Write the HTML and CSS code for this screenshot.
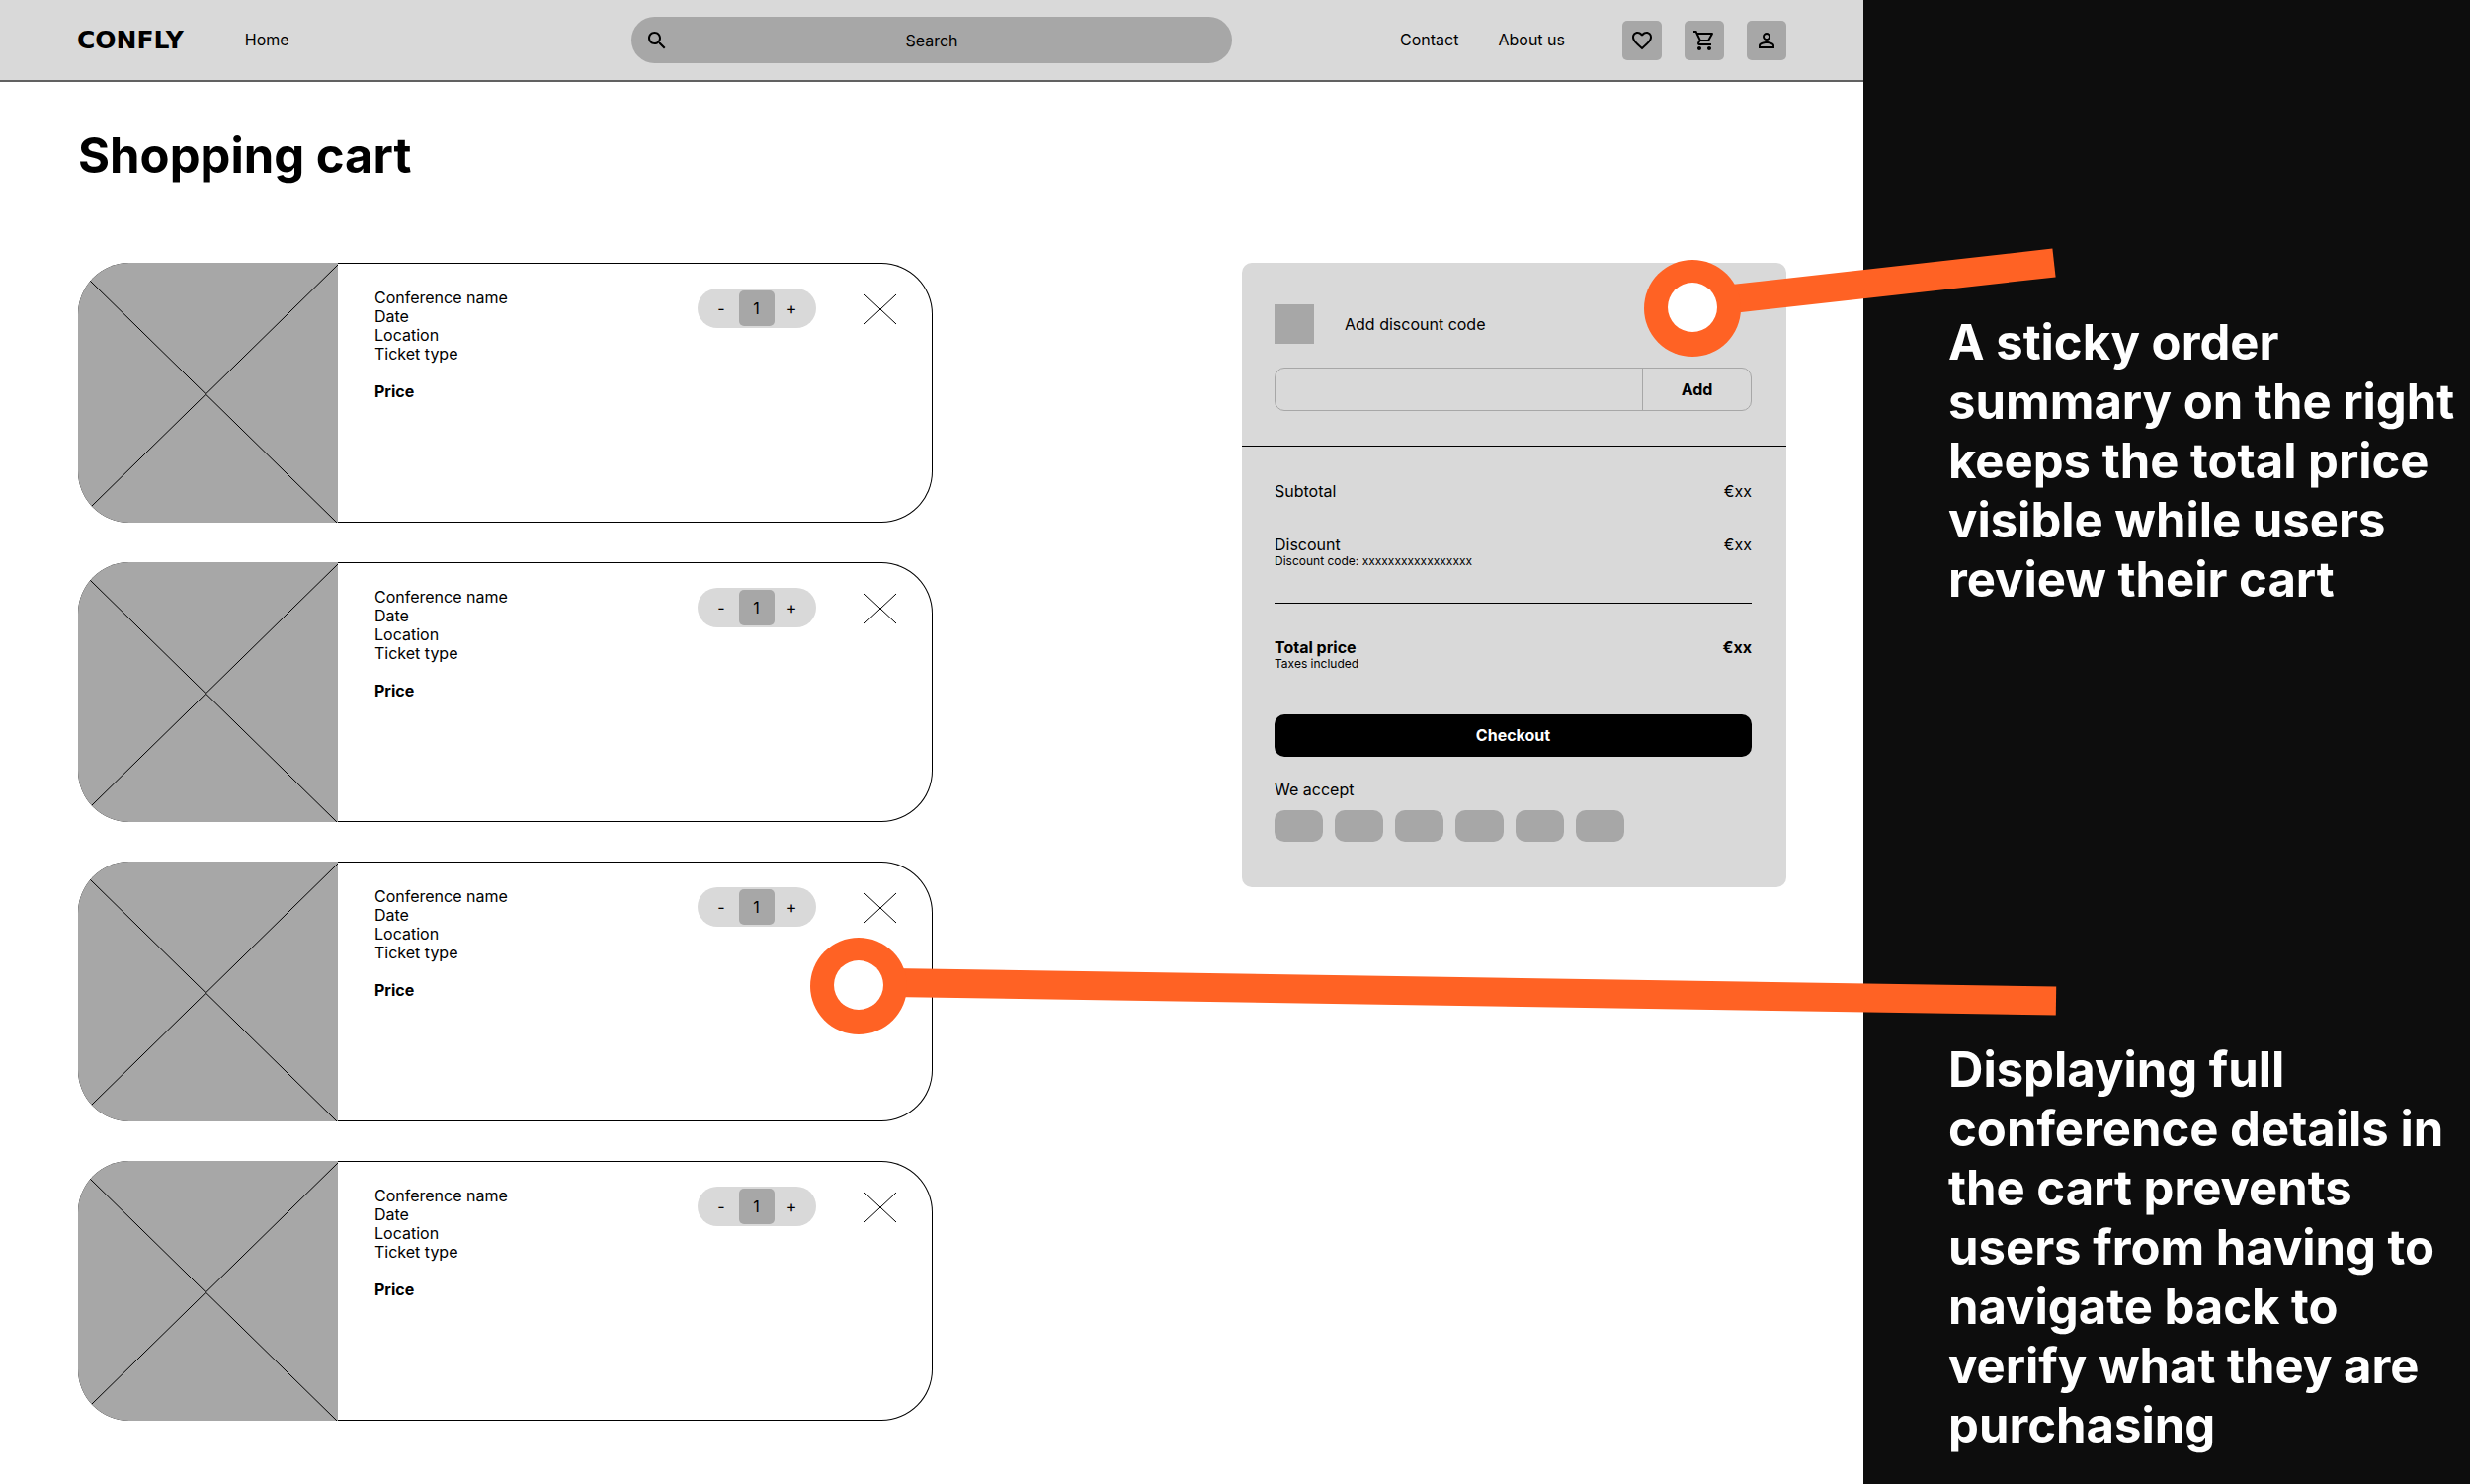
FILE: index.html
```html
<!DOCTYPE html>
<html lang="en">
<head>
  <meta charset="UTF-8">
  <meta name="viewport" content="width=device-width, initial-scale=1">
  <title>Confly - Shopping cart</title>
  <link rel="stylesheet" href="styles.css">
</head>
<body>

  <div class="page">

    <header class="topbar">
      <nav class="topbar-left">
        <a class="logo" href="index.html">CONFLY</a>
        <a href="index.html">Home</a>
      </nav>

      <form class="search">
        <svg class="search-icon" viewBox="0 0 24 24"><path d="M15.5 14h-.79l-.28-.27C15.41 12.59 16 11.11 16 9.5 16 5.91 13.09 3 9.5 3S3 5.91 3 9.5 5.91 16 9.5 16c1.61 0 3.09-.59 4.23-1.57l.27.28v.79l5 4.99L20.49 19l-4.99-5zm-6 0C7.01 14 5 11.99 5 9.5S7.01 5 9.5 5 14 7.01 14 9.5 11.99 14 9.5 14z"/></svg>
        <input type="text" placeholder="Search" aria-label="Search">
      </form>

      <nav class="topbar-right">
        <a href="contact.html">Contact</a>
        <a href="about.html">About us</a>
        <div class="icons">
          <button type="button" aria-label="Favourites">
            <svg viewBox="0 0 24 24"><path d="M16.5 3c-1.74 0-3.41.81-4.5 2.09C10.91 3.81 9.24 3 7.5 3 4.42 3 2 5.42 2 8.5c0 3.78 3.4 6.86 8.55 11.54L12 21.35l1.45-1.32C18.6 15.36 22 12.28 22 8.5 22 5.42 19.58 3 16.5 3zm-4.4 15.55l-.1.1-.1-.1C7.14 14.24 4 11.39 4 8.5 4 6.5 5.5 5 7.5 5c1.54 0 3.04.99 3.57 2.36h1.87C13.46 5.99 14.96 5 16.5 5c2 0 3.5 1.5 3.5 3.5 0 2.89-3.14 5.74-7.9 10.05z"/></svg>
          </button>
          <button type="button" aria-label="Cart">
            <svg viewBox="0 0 24 24"><path d="M15.55 13c.75 0 1.41-.41 1.75-1.03l3.58-6.49c.37-.66-.11-1.48-.87-1.48H5.21l-.94-2H1v2h2l3.6 7.59-1.35 2.44C4.52 15.37 5.48 17 7 17h12v-2H7l1.1-2h7.45zM6.16 6h12.15l-2.76 5H8.53L6.16 6zM7 18c-1.1 0-1.99.9-1.99 2S5.9 22 7 22s2-.9 2-2-.9-2-2-2zm10 0c-1.1 0-1.99.9-1.99 2s.89 2 1.99 2 2-.9 2-2-.9-2-2-2z"/></svg>
          </button>
          <button type="button" aria-label="Account">
            <svg viewBox="0 0 24 24"><path d="M12 5.9c1.16 0 2.1.94 2.1 2.1s-.94 2.1-2.1 2.1S9.9 9.16 9.9 8s.94-2.1 2.1-2.1m0 9c2.97 0 6.1 1.46 6.1 2.1v1.1H5.9V17c0-.64 3.13-2.1 6.1-2.1M12 4C9.79 4 8 5.79 8 8s1.79 4 4 4 4-1.79 4-4-1.79-4-4-4zm0 9c-2.67 0-8 1.34-8 4v3h16v-3c0-2.66-5.33-4-8-4z"/></svg>
          </button>
        </div>
      </nav>
    </header>

    <main>
      <h1>Shopping cart</h1>

      <div class="content">
        <div class="cart">

          <article class="item">
            <svg class="item-image" viewBox="0 0 263 263"><path d="M12 18L263 264M13 247L264 1"/></svg>
            <div class="item-info">
              <p>Conference name</p>
              <p>Date</p>
              <p>Location</p>
              <p>Ticket type</p>
              <p class="price">Price</p>
            </div>
            <div class="quantity">
              <button type="button" aria-label="Less">-</button>
              <input type="text" value="1" aria-label="Quantity">
              <button type="button" aria-label="More">+</button>
            </div>
            <button type="button" class="remove" aria-label="Remove">
              <svg viewBox="0 0 34 32"><path d="M1 1L33 31M33 1L1 31"/></svg>
            </button>
          </article>

          <article class="item">
            <svg class="item-image" viewBox="0 0 263 263"><path d="M12 18L263 264M13 247L264 1"/></svg>
            <div class="item-info">
              <p>Conference name</p>
              <p>Date</p>
              <p>Location</p>
              <p>Ticket type</p>
              <p class="price">Price</p>
            </div>
            <div class="quantity">
              <button type="button" aria-label="Less">-</button>
              <input type="text" value="1" aria-label="Quantity">
              <button type="button" aria-label="More">+</button>
            </div>
            <button type="button" class="remove" aria-label="Remove">
              <svg viewBox="0 0 34 32"><path d="M1 1L33 31M33 1L1 31"/></svg>
            </button>
          </article>

          <article class="item">
            <svg class="item-image" viewBox="0 0 263 263"><path d="M12 18L263 264M13 247L264 1"/></svg>
            <div class="item-info">
              <p>Conference name</p>
              <p>Date</p>
              <p>Location</p>
              <p>Ticket type</p>
              <p class="price">Price</p>
            </div>
            <div class="quantity">
              <button type="button" aria-label="Less">-</button>
              <input type="text" value="1" aria-label="Quantity">
              <button type="button" aria-label="More">+</button>
            </div>
            <button type="button" class="remove" aria-label="Remove">
              <svg viewBox="0 0 34 32"><path d="M1 1L33 31M33 1L1 31"/></svg>
            </button>
          </article>

          <article class="item">
            <svg class="item-image" viewBox="0 0 263 263"><path d="M12 18L263 264M13 247L264 1"/></svg>
            <div class="item-info">
              <p>Conference name</p>
              <p>Date</p>
              <p>Location</p>
              <p>Ticket type</p>
              <p class="price">Price</p>
            </div>
            <div class="quantity">
              <button type="button" aria-label="Less">-</button>
              <input type="text" value="1" aria-label="Quantity">
              <button type="button" aria-label="More">+</button>
            </div>
            <button type="button" class="remove" aria-label="Remove">
              <svg viewBox="0 0 34 32"><path d="M1 1L33 31M33 1L1 31"/></svg>
            </button>
          </article>

        </div>

        <aside class="summary">
          <form class="discount">
            <div class="discount-check">
              <input type="checkbox" id="use-code">
              <label for="use-code">Add discount code</label>
            </div>
            <div class="discount-field">
              <input type="text" aria-label="Discount code">
              <button type="button">Add</button>
            </div>
          </form>

          <div class="costs">
            <div class="row">
              <p>Subtotal</p>
              <p>€xx</p>
            </div>
            <div class="row">
              <div>
                <p>Discount</p>
                <p class="small">Discount code: xxxxxxxxxxxxxxxxx</p>
              </div>
              <p>€xx</p>
            </div>
          </div>

          <div class="total">
            <div class="row">
              <div>
                <p class="bold">Total price</p>
                <p class="small">Taxes included</p>
              </div>
              <p class="bold">€xx</p>
            </div>
            <button type="button" class="checkout">Checkout</button>
            <p>We accept</p>
            <div class="payments">
              <span></span>
              <span></span>
              <span></span>
              <span></span>
              <span></span>
              <span></span>
            </div>
          </div>
        </aside>
      </div>
    </main>

  </div>

  <section class="notes">
    <p>A sticky order summary on the right keeps the total price visible while users review their cart</p>
    <p>Displaying full conference details in the cart prevents users from having to navigate back to verify what they are purchasing</p>
  </section>

  <!-- pointers from the notes to the page -->
  <svg class="pointers" viewBox="0 0 2500 1502">
    <line x1="1713" y1="307" x2="2079" y2="266"/>
    <circle class="ring" cx="1713" cy="312" r="49"/>
    <circle class="hole" cx="1713" cy="311" r="25"/>
    <line x1="869" y1="994" x2="2081" y2="1013"/>
    <circle class="ring" cx="869" cy="998" r="49"/>
    <circle class="hole" cx="869" cy="997" r="25"/>
  </svg>

</body>
</html>
```
FILE: styles.css
```css
* {
  box-sizing: border-box;
}

body {
  margin: 0;
  min-height: 100vh;
  position: relative;
  display: grid;
  grid-template-columns: 1fr 614px;
  background-color: #fff;
  color: #000;
  font-family: Inter, sans-serif;
  font-size: 16px;
  line-height: 19px;
}

h1,
p {
  margin: 0;
}

a {
  color: inherit;
  text-decoration: none;
}

button,
input {
  font: inherit;
  color: inherit;
  margin: 0;
  padding: 0;
  border: none;
  background: none;
}

button {
  cursor: pointer;
}

/* top bar */

.topbar {
  display: grid;
  grid-template-columns: 1fr 608px 1fr;
  align-items: center;
  padding: 17px 78px;
  background-color: #d9d9d9;
  border-bottom: 2px solid #616161;
}

.topbar-left {
  display: flex;
  align-items: center;
  gap: 62px;
}

.logo {
  font-family: "DejaVu Sans", sans-serif;
  font-size: 25px;
  font-weight: bold;
}

.search {
  position: relative;
}

.search input {
  display: block;
  width: 100%;
  height: 47px;
  border-radius: 24px;
  background-color: #a7a7a7;
  text-align: center;
}

.search input::placeholder {
  color: #000;
  opacity: 1;
}

.search-icon {
  position: absolute;
  left: 14px;
  top: 12px;
  width: 24px;
  height: 24px;
}

.topbar-right {
  display: flex;
  align-items: center;
  justify-content: flex-end;
  gap: 40px;
}

.icons {
  display: flex;
  gap: 23px;
  margin-left: 18px;
}

.icons button {
  display: flex;
  align-items: center;
  justify-content: center;
  width: 40px;
  height: 40px;
  border-radius: 5px;
  background-color: #a7a7a7;
}

.icons svg {
  width: 24px;
  height: 24px;
}

/* cart */

main {
  padding: 45px 78px 64px 79px;
}

h1 {
  font-size: 49px;
  line-height: 60px;
  margin-bottom: 78px;
}

.content {
  display: flex;
  justify-content: space-between;
  align-items: flex-start;
}

.cart {
  display: flex;
  flex-direction: column;
  gap: 40px;
  width: 50%;
}

.item {
  display: flex;
  align-items: flex-start;
  height: 263px;
  border-radius: 52px;
  box-shadow: inset 0 0 0 1px #000;
  overflow: hidden;
}

.item-image {
  width: 263px;
  height: 263px;
  background-color: #a7a7a7;
  fill: none;
  stroke: #000;
}

.item-info {
  flex: 1;
  padding: 26px 37px;
}

.price {
  margin-top: 19px;
  font-weight: bold;
}

.quantity {
  display: flex;
  align-items: center;
  margin: 26px 48px 0 0;
  padding: 0 7px;
  height: 40px;
  border-radius: 20px;
  background-color: #d9d9d9;
}

.quantity button {
  width: 35px;
  height: 36px;
}

.quantity input {
  width: 36px;
  height: 36px;
  border-radius: 5px;
  background-color: #a7a7a7;
  text-align: center;
}

.remove {
  margin: 31px 36px 0 0;
}

.remove svg {
  display: block;
  width: 34px;
  height: 32px;
  stroke: #000;
}

/* order summary */

.summary {
  position: sticky;
  top: 24px;
  width: 551px;
  border-radius: 10px;
  background-color: #d9d9d9;
}

.discount {
  padding: 42px 35px 35px 33px;
  border-bottom: 1px solid #000;
}

.discount-check {
  display: flex;
  align-items: center;
  gap: 31px;
  margin-bottom: 24px;
}

.discount-check input {
  appearance: none;
  width: 40px;
  height: 40px;
  background-color: #a7a7a7;
}

.discount-field {
  display: flex;
  height: 44px;
  border: 1px solid #a7a7a7;
  border-radius: 10px;
}

.discount-field input {
  flex: 1;
}

.discount-field button {
  width: 110px;
  border-left: 1px solid #a7a7a7;
  font-weight: bold;
}

.row {
  display: flex;
  justify-content: space-between;
}

.small {
  font-size: 12px;
  line-height: 14px;
}

.bold {
  font-weight: bold;
}

.costs {
  display: flex;
  flex-direction: column;
  gap: 35px;
  margin: 0 35px 0 33px;
  padding: 36px 0 35px;
  border-bottom: 1px solid #000;
}

.total {
  padding: 35px 35px 46px 33px;
}

.checkout {
  display: block;
  width: 100%;
  height: 43px;
  margin: 44px 0 24px;
  border-radius: 10px;
  background-color: #000;
  color: #fff;
  font-weight: bold;
}

.payments {
  display: flex;
  gap: 12px;
  margin-top: 11px;
}

.payments span {
  width: 49px;
  height: 32px;
  border-radius: 10px;
  background-color: #a7a7a7;
}

/* notes */

.notes {
  padding: 317px 0 28px 86px;
  background-color: #0d0d0d;
  color: #fff;
  font-size: 49px;
  line-height: 60px;
  font-weight: bold;
}

.notes p + p {
  margin-top: 436px;
}

.pointers {
  position: absolute;
  left: 0;
  top: 0;
  width: 100%;
  pointer-events: none;
}

.pointers line {
  stroke: #ff6224;
  stroke-width: 29;
}

.ring {
  fill: #ff6224;
}

.hole {
  fill: #fff;
}
```
